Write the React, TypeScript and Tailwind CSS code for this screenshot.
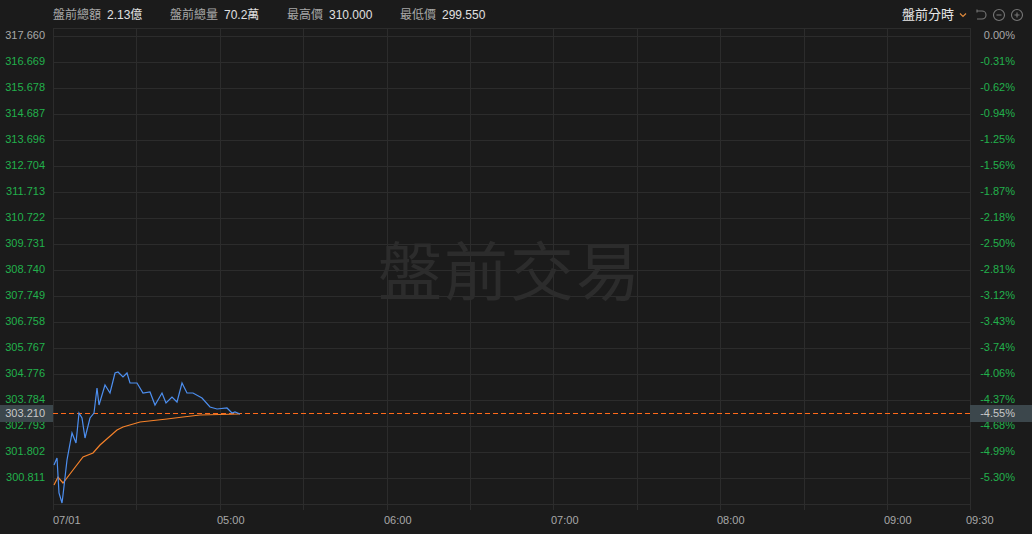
import React from "react";

const left = ["317.660","316.669","315.678","314.687","313.696","312.704","311.713","310.722","309.731","308.740","307.749","306.758","305.767","304.776","303.784","302.793","301.802","300.811"];
const right = ["0.00%","-0.31%","-0.62%","-0.94%","-1.25%","-1.56%","-1.87%","-2.18%","-2.50%","-2.81%","-3.12%","-3.43%","-3.74%","-4.06%","-4.37%","-4.68%","-4.99%","-5.30%"];
const times: [string, number][] = [["07/01",53],["05:00",217],["06:00",384],["07:00",551],["08:00",717],["09:00",884],["09:30",966]];
const blue = "54,465 57,458 59,493 62,503 63,495 67,460 72,433 76,443 79,413 82,418 85,438 90,418 94,413 97,388 99,405 105,385 110,393 115,373 118,372 123,377 127,373 130,383 137,383 143,393 150,392 155,405 162,393 166,403 172,397 177,402 182,383 187,393 193,393 202,398 210,407 217,409 227,408 232,413 235,412 240,414";
const orange = "54,485 58,477 63,483 73,470 83,457 93,453 100,445 117,430 123,427 140,422 167,419 183,417 200,415 240,414";

export default function App() {
  const font = { fontFamily: '"Liberation Sans","Noto Sans CJK TC",sans-serif' };
  return (
    <div className="relative w-[1032px] h-[534px] bg-[#1b1b1b] overflow-hidden text-[11px]" style={font}>
      <div className="flex items-center h-[29px] pl-[53px] pr-[8px] text-[#a8a8a8] text-[12px]">
        <span className="w-[117px]">盤前總額<span className="ml-[6px] text-[#e0e0e0]">2.13億</span></span>
        <span className="w-[117px]">盤前總量<span className="ml-[6px] text-[#e0e0e0]">70.2萬</span></span>
        <span className="w-[113px]">最高價<span className="ml-[6px] text-[#e0e0e0]">310.000</span></span>
        <span>最低價<span className="ml-[6px] text-[#e0e0e0]">299.550</span></span>
        <div className="ml-auto flex items-center gap-[4px] text-[#e8e8e8] text-[13px]">
          <span>盤前分時</span>
          <svg width="10" height="10" viewBox="0 0 10 10" className="mr-[2px]"><path d="M2 3.5 L5 6.5 L8 3.5" stroke="#e08a3c" fill="none" strokeWidth="1.2"/></svg>
          <svg width="14" height="14" viewBox="0 0 14 14"><path d="M3 3 H8 A4 4 0 0 1 8 11 H3" stroke="#777" fill="none" strokeWidth="1.1"/><path d="M3 1.5 V4.5" stroke="#777" strokeWidth="1.1"/></svg>
          <svg width="14" height="14" viewBox="0 0 14 14"><circle cx="7" cy="7" r="5.5" stroke="#777" fill="none" strokeWidth="1.1"/><path d="M4.5 7 H9.5" stroke="#777" strokeWidth="1.1"/></svg>
          <svg width="14" height="14" viewBox="0 0 14 14"><circle cx="7" cy="7" r="5.5" stroke="#777" fill="none" strokeWidth="1.1"/><path d="M4.5 7 H9.5 M7 4.5 V9.5" stroke="#777" strokeWidth="1.1"/></svg>
        </div>
      </div>
      <svg className="absolute left-0 top-0" width="1032" height="534">
        <line x1="53" y1="28.5" x2="970" y2="28.5" stroke="#2c2c2c" />
        {Array.from({ length: 19 }).map((_, i) => (
          <line key={i} x1="53" x2="970" y1={36 + 26 * i + 0.5} y2={36 + 26 * i + 0.5} stroke="#2c2c2c" />
        ))}
        {Array.from({ length: 12 }).map((_, i) => {
          const x = Math.round(53 + i * 83.4) + 0.5;
          return <line key={i} x1={x} x2={x} y1="28" y2="510" stroke="#2c2c2c" />;
        })}
        <text x="510" y="295" textAnchor="middle" fontSize="64" fill="#2c2c2c" style={{ fontFamily: '"Noto Sans CJK TC",sans-serif' }} letterSpacing="2">盤前交易</text>
        <path d="M53 413.5 H970" stroke="#ff6a1a" strokeWidth="1.2" strokeDasharray="5 3" fill="none" />
        <polyline points={orange} fill="none" stroke="#f5822a" strokeWidth="1.2" />
        <polyline points={blue} fill="none" stroke="#4d8ff0" strokeWidth="1.2" />
      </svg>
      {left.map((t, i) => (
        <div key={t} className={`absolute left-0 w-[45px] text-right leading-none ${i === 0 ? "text-[#a8a8a8]" : "text-[#22b14c]"}`} style={{ top: 36 + 26 * i - 6 }}>{t}</div>
      ))}
      {right.map((t, i) => (
        <div key={t} className={`absolute right-[17px] text-right leading-none ${i === 0 ? "text-[#a8a8a8]" : "text-[#22b14c]"}`} style={{ top: 36 + 26 * i - 6 }}>{t}</div>
      ))}
      <div className="absolute left-0 top-[405px] w-[53px] h-[17px] bg-[#3c474c] text-[#c8c8c8] flex items-center justify-end pr-[8px]">303.210</div>
      <div className="absolute left-[970px] top-[405px] w-[62px] h-[17px] bg-[#3c474c] text-[#c8c8c8] flex items-center justify-end pr-[17px]">-4.55%</div>
      {times.map(([t, x]) => (
        <div key={t} className="absolute top-[515px] text-[#a8a8a8] leading-none" style={{ left: x }}>{t}</div>
      ))}
    </div>
  );
}
